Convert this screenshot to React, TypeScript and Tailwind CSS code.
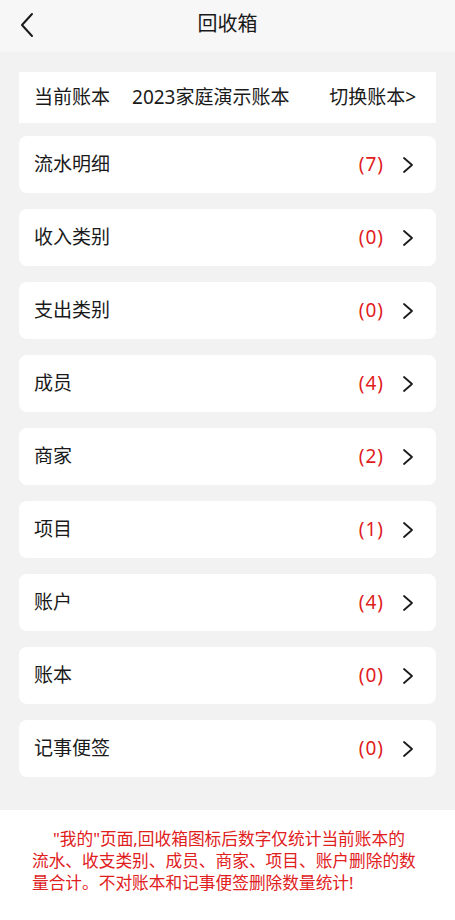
import React from "react";

const rows: [string, number][] = [
  ["流水明细", 7],
  ["收入类别", 0],
  ["支出类别", 0],
  ["成员", 4],
  ["商家", 2],
  ["项目", 1],
  ["账户", 4],
  ["账本", 0],
  ["记事便签", 0],
];

function Chevron() {
  return (
    <svg width="12" height="18" viewBox="0 0 12 18" fill="none">
      <path d="M2 2 L10 9 L2 16" stroke="#1a1a1a" strokeWidth="1.8" strokeLinecap="round" strokeLinejoin="round" />
    </svg>
  );
}

export default function App() {
  return (
    <div
      className="w-[455px] min-h-[920px] bg-white flex flex-col text-[#1a1a1a]"
      style={{ fontFamily: '"Noto Sans", "Noto Sans CJK SC", sans-serif' }}
    >
      <div className="h-[52px] bg-[#f7f7f7] flex items-center relative shrink-0">
        <div className="absolute left-[19px] top-[12px]">
          <svg width="16" height="26" viewBox="0 0 16 26" fill="none">
            <path d="M13 2 L3 13 L13 24" stroke="#1a1a1a" strokeWidth="2" strokeLinecap="round" strokeLinejoin="round" />
          </svg>
        </div>
        <div className="flex-1 text-center text-[20px] leading-none -mt-[4px]">回收箱</div>
      </div>
      <div className="bg-[#f2f2f2] px-[19px] pt-[20px] pb-[33px] flex flex-col gap-[16px]">
        <div className="bg-white h-[51px] flex items-center pl-[15px] pr-[20px] text-[19px] -mb-[3px]">
          <span>当前账本</span>
          <span className="ml-[22px]">2023家庭演示账本</span>
          <span className="ml-auto">切换账本&gt;</span>
        </div>
        {rows.map(([name, n]) => (
          <div key={name} className="bg-white h-[57px] rounded-[8px] flex items-center pl-[15px] pr-[22px] text-[19px]">
            <span>{name}</span>
            <span className="ml-auto text-[#e0201c] tracking-[1px]">({n})</span>
            <span className="ml-[18px] flex items-center">
              <Chevron />
            </span>
          </div>
        ))}
      </div>
      <div className="pl-[32px] pt-[18px] text-[16.7px] leading-[22px] text-[#e0201c] whitespace-nowrap">
        <p className="pl-[21px]">"我的"页面,回收箱图标后数字仅统计当前账本的</p>
        <p>流水、收支类别、成员、商家、项目、账户删除的数</p>
        <p>量合计。不对账本和记事便签删除数量统计!</p>
      </div>
    </div>
  );
}
